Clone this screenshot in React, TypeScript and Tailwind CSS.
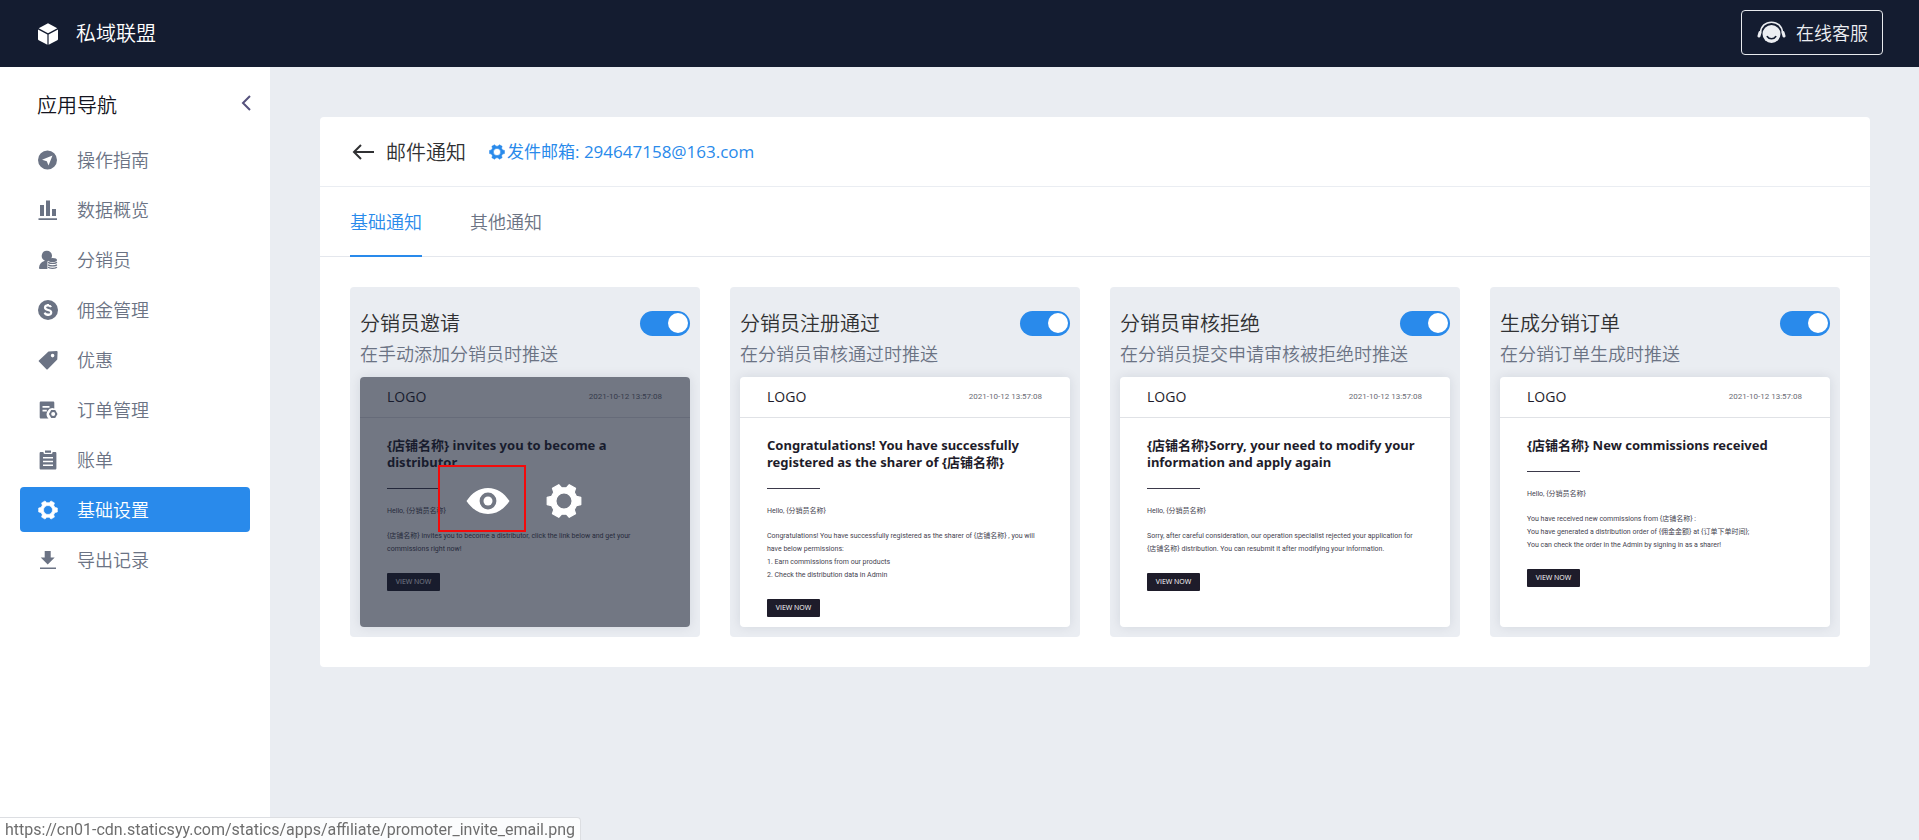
import type { ReactNode } from "react";

const GearIcon = ({ className }: { className?: string }) => (
  <svg viewBox="0 0 24 24" className={className} aria-hidden="true">
    <path
      fill="currentColor"
      stroke="currentColor"
      strokeWidth="0.8"
      strokeLinejoin="round"
      fillRule="evenodd"
      d="M23.2 9.6V14.4L20.36 15.04 18.82 17.72 19.7 20.5 15.5 22.9 13.55 20.76H10.45L8.5 22.9 4.3 20.5 5.18 17.72 3.64 15.04.8 14.4V9.6L3.64 8.96 5.18 6.28 4.3 3.5 8.5 1.1 10.45 3.24H13.55L15.5 1.1 19.7 3.5 18.82 6.28 20.36 8.960ZM12 6.600a5.400 5.400 0 1 0 0 10.800 5.400 5.400 0 0 0 0-10.800Z"
    />
  </svg>
);

const EyeIcon = () => (
  <svg viewBox="0 0 44 28" className="w-11 h-7" aria-hidden="true">
    <path
      fill="currentColor"
      fillRule="evenodd"
      d="M.5 14C6 6 13 1 22 1s16 5 21.500 13C38 22 31 27 22 27S6 22 .5 14ZM22 5.600a8.400 8.400 0 1 0 0 16.800 8.400 8.400 0 0 0 0-16.800Z"
    />
    <circle cx="22" cy="14" r="4.500" fill="currentColor" />
  </svg>
);

const NavIcon = ({ children }: { children: ReactNode }) => (
  <svg viewBox="0 0 20 20" className="w-5 h-5 shrink-0" fill="currentColor" aria-hidden="true">
    {children}
  </svg>
);

const navItems = [
  {
    label: "操作指南",
    icon: (
      <NavIcon>
        <path fillRule="evenodd" d="M9.500.5a9.500 9.500 0 1 0 0 19 9.500 9.500 0 0 0 0-19ZM14.500 5.500 10.500 15.500 8.800 11.200 4 9.800Z" />
      </NavIcon>
    ),
  },
  {
    label: "数据概览",
    icon: (
      <NavIcon>
        <path d="M2 5h4v11H2zM8 .5h4V16H8zM14 9h4v7h-4zM.5 18.200H19V20H.5z" />
      </NavIcon>
    ),
  },
  {
    label: "分销员",
    icon: (
      <NavIcon>
        <path d="M9 .8a5 5 0 0 1 5 5c0 1.700-.8 3.100-2 4-1.700.6-2.600 1.300-2.600 2.400v6.800H2c-.8 0-1.200-.5-1-1.300.4-3.400 2-5.600 5.300-6.700l.5-.6A5 5 0 0 1 9 .8Z" />
        <ellipse cx="14.500" cy="10" rx="4.500" ry="2" />
        <path
          fill="none"
          stroke="currentColor"
          strokeWidth="1.300"
          d="M10.200 12.200c1 1.700 7.600 1.700 8.600 0M10.200 14.600c1 1.700 7.600 1.700 8.600 0M10.200 17c1 1.700 7.600 1.700 8.600 0"
        />
      </NavIcon>
    ),
  },
  {
    label: "佣金管理",
    icon: (
      <NavIcon>
        <circle cx="10" cy="10" r="10" />
        <path
          fill="none"
          stroke="#fff"
          strokeWidth="2.200"
          d="M13 7.200C12.500 5.900 11.400 5.300 10 5.300c-1.800 0-3 .9-3 2.300 0 3.300 6.200 1.500 6.200 4.800 0 1.400-1.300 2.300-3.200 2.300-1.700 0-2.900-.7-3.300-2.100M10 4v1.500M10 14.500V16"
        />
      </NavIcon>
    ),
  },
  {
    label: "优惠",
    icon: (
      <NavIcon>
        <path
          fillRule="evenodd"
          d="M10.500 1.500 18.700 1c.6 0 .9.300.9.900L19.300 9.500 9.700 19.200c-.5.400-.9.400-1.300 0L.9 11.600c-.4-.4-.4-.8 0-1.200ZM14.600 3.800a1.800 1.800 0 1 0 0 3.600 1.800 1.800 0 0 0 0-3.600Z"
        />
      </NavIcon>
    ),
  },
  {
    label: "订单管理",
    icon: (
      <NavIcon>
        <path
          fillRule="evenodd"
          d="M3 1.500h12c.8 0 1.300.5 1.300 1.300v5.600A6 6 0 0 0 10.500 18.500H3c-.8 0-1.300-.5-1.300-1.300V2.800c0-.8.5-1.300 1.300-1.300ZM4.500 6v1.700h7V6ZM4.500 9.700v1.700h4.300V9.700Z"
        />
        <path
          fillRule="evenodd"
          d="M13.200 10h4l2.300 4-2.300 4h-4l-2.300-4ZM15.200 12a2 2 0 1 0 0 4 2 2 0 0 0 0-4Z"
        />
      </NavIcon>
    ),
  },
  {
    label: "账单",
    icon: (
      <NavIcon>
        <path
          fillRule="evenodd"
          d="M3 2h2.500v.800c0 .7.500 1.200 1.200 1.200h6.600c.7 0 1.200-.5 1.200-1.200V2H17c.9 0 1.400.5 1.400 1.400v14.800c0 .9-.5 1.400-1.400 1.400H3c-.9 0-1.400-.5-1.400-1.400V3.400C1.600 2.500 2.100 2 3 2ZM5 7v1.500h10V7ZM5 10.700v1.500h10v-1.500ZM5 14.400v1.500h10v-1.500Z"
        />
        <path d="M7 .5h6v2.300H7z" />
      </NavIcon>
    ),
  },
  { label: "基础设置", active: true, icon: <GearIcon className="w-5 h-5 shrink-0" /> },
  {
    label: "导出记录",
    icon: (
      <NavIcon>
        <path d="M6.700 1h6v6.500h4L9.700 14.500l-7-7h4zM2 17.500h16v1.600H2z" />
      </NavIcon>
    ),
  },
];

const templates = [
  {
    title: "分销员邀请",
    description: "在手动添加分销员时推送",
    heading: ["{店铺名称} invites you to become a", "distributor"],
    body: [
      "{店铺名称} invites you to become a distributor, click the link below and get your",
      "commissions right now!",
    ],
    hovered: true,
  },
  {
    title: "分销员注册通过",
    description: "在分销员审核通过时推送",
    heading: ["Congratulations! You have successfully", "registered as the sharer of {店铺名称}"],
    body: [
      "Congratulations! You have successfully registered as the sharer of {店铺名称} , you will",
      "have below permissions:",
      "1. Earn commissions from our products",
      "2. Check the distribution data in Admin",
    ],
  },
  {
    title: "分销员审核拒绝",
    description: "在分销员提交申请审核被拒绝时推送",
    heading: ["{店铺名称}Sorry, your need to modify your", "information and apply again"],
    body: [
      "Sorry, after careful consideration, our operation specialist rejected your application for",
      "{店铺名称} distribution. You can resubmit it after modifying your information.",
    ],
  },
  {
    title: "生成分销订单",
    description: "在分销订单生成时推送",
    heading: ["{店铺名称} New commissions received"],
    body: [
      "You have received new commissions from {店铺名称} :",
      "You have generated a distribution order of {佣金金额} at {订单下单时间};",
      "You can check the order in the Admin by signing in as a sharer!",
    ],
  },
];

type Template = (typeof templates)[number];

const EmailPreview = ({ template }: { template: Template }) => (
  <div className="relative h-[250px] overflow-hidden rounded bg-white font-normal shadow-[0_0_12px_rgba(20,28,48,0.1)]">
    <div className="flex h-[41px] items-center justify-between border-b border-[#e0e2e6] pl-[27px] pr-7 text-[#1e1c2a]">
      <span className="text-sm">LOGO</span>
      <span className="font-['Roboto',sans-serif] text-[8px] text-[#6b6b75]">2021-10-12 13:57:08</span>
    </div>
    <div className="px-[27px] pt-[19px] whitespace-nowrap text-[#1e1c2a]">
      <h3 className="font-['Noto_Sans','Noto_Sans_CJK_SC',sans-serif] text-[13px] leading-[17px] font-bold">
        {template.heading.map((line) => (
          <span key={line} className="block">
            {line}
          </span>
        ))}
      </h3>
      <div className="mt-[17px] h-px w-[53px] bg-[#3b394a]" />
      <div className="mt-4 font-['Roboto','Noto_Sans_CJK_SC',sans-serif] text-[7px] leading-[13px] text-[#45434f]">
        <p>Hello, {"{分销员名称}"}</p>
        <div className="mt-3">
          {template.body.map((line) => (
            <p key={line}>{line}</p>
          ))}
        </div>
      </div>
      <button className="mt-[17px] flex h-[18px] w-[53px] items-center justify-center rounded-[1px] bg-[#1e1c2a] text-[7px] text-white">
        VIEW NOW
      </button>
    </div>
    {template.hovered && (
      <div className="absolute inset-0 flex items-center justify-center gap-9 bg-[#141c30]/60 pr-0.5 pb-0.5 text-white">
        <button aria-label="预览" className="relative">
          <EyeIcon />
          <span className="absolute -left-7 -top-[22px] h-[67px] w-[88px] border-2 border-[#f30b0b]" />
        </button>
        <button aria-label="设置">
          <GearIcon className="h-9 w-9" />
        </button>
      </div>
    )}
  </div>
);

const TemplateCard = ({ template }: { template: Template }) => (
  <article className="rounded bg-[#eaedf2] px-2.5 pt-[21px] pb-2.5">
    <label className="flex h-[30px] items-center justify-between text-xl text-[#303133]">
      <span className="pt-0.5">{template.title}</span>
      <input
        type="checkbox"
        role="switch"
        defaultChecked
        className="flex h-[25px] w-[50px] appearance-none items-center rounded-full bg-gray-300 px-0.5 before:h-5 before:w-5 before:rounded-full before:bg-white checked:justify-end checked:bg-[#298aeb]"
      />
    </label>
    <p className="mb-2 pt-0.5 text-lg leading-[29px] text-[#6b7384]">{template.description}</p>
    <EmailPreview template={template} />
  </article>
);

export default function App() {
  return (
    <div className="flex min-h-screen flex-col bg-[#eaedf2] font-['Open_Sans','Noto_Sans_CJK_SC',sans-serif] font-[350] text-[#303133]">
      <header className="flex h-[67px] items-center justify-between bg-[#141c30] pl-[38px] pr-9 text-white">
        <div className="flex items-center gap-[18px]">
          <svg viewBox="0 0 20 22" className="h-[22px] w-5" fill="currentColor" aria-hidden="true">
            <path d="M10 .3 19.300 5.200 10 10.200.7 5.200ZM0 6.500 9.400 11.500V21.700L.7 17.200C.2 17 0 16.700 0 16.200ZM20 6.500 10.600 11.500V21.700L19.300 17.200C19.800 17 20 16.700 20 16.200Z" />
          </svg>
          <span className="text-xl">私域联盟</span>
        </div>
        <button className="-mt-0.5 flex h-[45px] w-[142px] items-center gap-2.5 rounded border border-[#e8eaee] pl-[15px] text-lg text-[#eceef2]">
          <svg viewBox="0 0 29 23" className="h-[23px] w-[29px] shrink-0" aria-hidden="true">
            <circle cx="14.500" cy="13" r="9" fill="currentColor" />
            <path fill="none" stroke="currentColor" strokeWidth="1.600" d="M3.500 11.500C4 5 8.500 1.200 14.500 1.200S25 5 25.500 11.500" />
            <path fill="none" stroke="currentColor" strokeWidth="3" strokeLinecap="round" d="M3 11.500 2 15M26 11.500l1 3.500" />
            <path fill="none" stroke="#141c30" strokeWidth="1.500" strokeLinecap="round" d="M10.200 15.500c2 3 6.600 3 8.600 0" />
          </svg>
          在线客服
        </button>
      </header>

      <div className="flex flex-1">
        <aside className="w-[270px] shrink-0 bg-white">
          <div className="flex h-[70px] items-center justify-between pt-1.5 pl-[37px] pr-[19px]">
            <h2 className="pt-0.5 text-xl text-[#141420]">应用导航</h2>
            <button aria-label="收起" className="pb-1">
              <svg viewBox="0 0 10 16" className="h-4 w-2.5" aria-hidden="true">
                <path d="M9 1 2 8l7 7" fill="none" stroke="#55517c" strokeWidth="2" />
              </svg>
            </button>
          </div>
          <nav className="flex flex-col gap-[5px] px-5">
            {navItems.map((item) => (
              <a
                key={item.label}
                href="#"
                className={
                  item.active
                    ? "flex h-[45px] items-center gap-[19px] rounded bg-[#298aeb] pl-[18px] text-lg text-white"
                    : "flex h-[45px] items-center gap-[19px] rounded pl-[18px] text-lg text-[#6b7384]"
                }
              >
                {item.icon}
                {item.label}
              </a>
            ))}
          </nav>
        </aside>

        <main className="min-w-0 flex-1 py-[50px] pl-[50px] pr-[49px]">
          <section className="rounded bg-white">
            <div className="flex h-[70px] items-center border-b border-[#eaedf2] px-[30px]">
              <button aria-label="返回" className="mr-3 pl-0.5">
                <svg viewBox="0 0 22 16" className="h-4 w-[22px]" aria-hidden="true">
                  <path d="M9 1 2 8l7 7M2 8h20" fill="none" stroke="#303133" strokeWidth="2" />
                </svg>
              </button>
              <h1 className="pt-0.5 text-xl">邮件通知</h1>
              <a href="#" className="ml-[23px] flex items-center gap-0.5 text-[17px] text-[#298aeb]">
                <GearIcon className="h-4 w-4" />
                <span className="font-normal">发件邮箱: 294647158@163.com</span>
              </a>
            </div>
            <div role="tablist" className="flex h-[70px] gap-12 border-b border-[#e4e7ed] px-[30px] text-lg">
              <button role="tab" aria-selected="true" className="-mb-px border-b-2 border-[#298aeb] pt-0.5 text-[#298aeb]">
                基础通知
              </button>
              <button role="tab" aria-selected="false" className="text-[#6b7384]">
                其他通知
              </button>
            </div>
            <div className="grid grid-cols-4 gap-[30px] p-[30px]">
              {templates.map((template) => (
                <TemplateCard key={template.title} template={template} />
              ))}
            </div>
          </section>
        </main>
      </div>

      <div className="fixed bottom-0 left-0 flex h-[23px] items-center rounded-tr-sm border-t border-r border-[#dcdee2] bg-white/80 px-[5px] pt-0.5 font-['Roboto',sans-serif] text-base font-normal text-[#6e6e6e]">
        https://cn01-cdn.staticsyy.com/statics/apps/affiliate/promoter_invite_email.png
      </div>
    </div>
  );
}
